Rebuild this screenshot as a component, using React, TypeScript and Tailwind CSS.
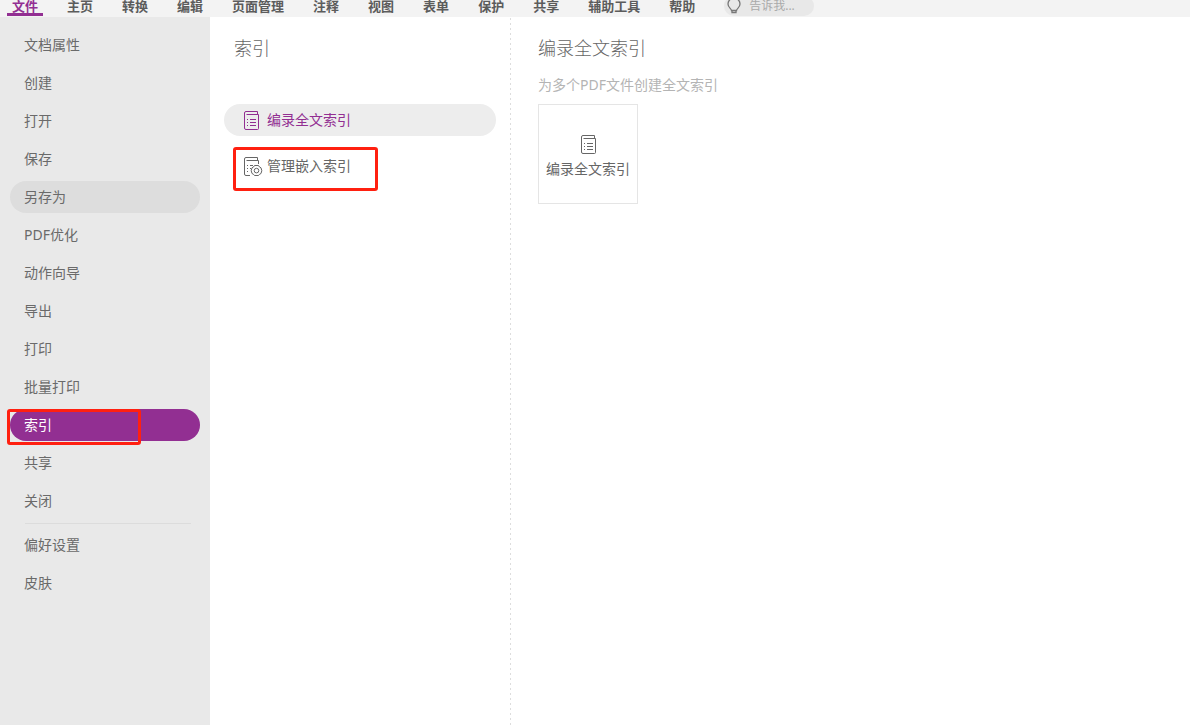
import React, { useState } from "react";
import clsx from "clsx";

const tabs = [
  "文件",
  "主页",
  "转换",
  "编辑",
  "页面管理",
  "注释",
  "视图",
  "表单",
  "保护",
  "共享",
  "辅助工具",
  "帮助",
];

const fileMenu = [
  "文档属性",
  "创建",
  "打开",
  "保存",
  "另存为",
  "PDF优化",
  "动作向导",
  "导出",
  "打印",
  "批量打印",
  "索引",
  "共享",
  "关闭",
];

const settingsMenu = ["偏好设置", "皮肤"];

function IndexIcon() {
  return (
    <svg width="15" height="20" viewBox="0 -1 15 20" fill="none" stroke="currentColor">
      <path d="M13.5 3.5V.5H2A1.5 1.5 0 0 0 .5 2v15A1.5 1.5 0 0 0 2 18.500h11.500a1 1 0 0 0 1-1V3.500H2.500" />
      <path d="M3 8.500h1M3 11.500h1M3 14.500h1M6 8.500h6M6 11.500h6M6 14.500h6" />
    </svg>
  );
}

function ManageIndexIcon() {
  return (
    <svg width="19" height="20" viewBox="0 -1 19 20" fill="none" stroke="currentColor">
      <path d="M13.5 3.5V.5H2A1.5 1.5 0 0 0 .5 2v15A1.5 1.5 0 0 0 2 18.500h4M2.500 3.500h12V7" />
      <path d="M3 8.500h1M3 11.500h1M3 14.500h1M6 8.500h3M6 11.500h1" />
      <path d="M10.500 8.500h4l1 1.500 1.500.8.800 2.900-.8 2.800-1.500.8-1 1.200h-4l-1-1.200-1.500-.8-.8-2.800.8-2.900 1.500-.8z" />
      <circle cx="12.500" cy="13.600" r="2.300" />
    </svg>
  );
}

function BulbIcon() {
  return (
    <svg width="14" height="17" viewBox="0 0 14 17" fill="none" stroke="currentColor" strokeWidth="1.3">
      <path d="M4.500 12.500C4.500 10.500 1 9.800 1 6a6 6 0 0 1 12 0c0 3.800-3.500 4.500-3.500 6.500z" />
      <path d="M5 12.500v2h4v-2" />
    </svg>
  );
}

function MenuItem({ label, active, hovered, onClick }: {
  label: string;
  active?: boolean;
  hovered?: boolean;
  onClick: () => void;
}) {
  return (
    <button
      onClick={onClick}
      className={clsx(
        "h-8 w-full rounded-full px-[14px] text-left text-sm",
        active ? "bg-[#922f92] text-white" : "text-[#6a6a6a] hover:bg-[#dddddd]",
        hovered && "bg-[#dddddd]"
      )}
    >
      {label}
    </button>
  );
}

export default function App() {
  const [tab, setTab] = useState("文件");
  const [section, setSection] = useState("索引");
  const [page, setPage] = useState("编录全文索引");

  return (
    <div className="flex min-h-screen flex-col bg-white font-['Noto_Sans','Noto_Sans_CJK_SC',sans-serif] text-[#666666]">
      <header className="flex h-[17px] items-end bg-[#f3f3f3] pb-px pl-[7px]">
        <nav className="flex gap-[19px]">
          {tabs.map((t) => (
            <button
              key={t}
              onClick={() => setTab(t)}
              className={clsx(
                "border-b-[3px] px-[5px] text-[13px] leading-[13px] font-bold",
                t === tab ? "border-[#922f92] text-[#922f92]" : "border-transparent text-[#5c5c5c]"
              )}
            >
              {t}
            </button>
          ))}
        </nav>
        <label className="ml-6 flex h-5 w-[90px] items-center gap-2 rounded-full bg-[#e8e8e8] pl-[3px] text-[#777777]">
          <BulbIcon />
          <input
            aria-label="告诉我"
            placeholder="告诉我..."
            className="w-14 bg-transparent text-xs outline-none placeholder:text-[#aaaaaa]"
          />
        </label>
      </header>

      <div className="flex grow">
        <aside className="flex w-[210px] shrink-0 flex-col bg-[#e9e9e9] px-[10px] pt-3">
          <nav className="flex flex-col gap-[6px]">
            {fileMenu.map((m) => (
              <div key={m} className="relative">
                <MenuItem
                  label={m}
                  active={m === section}
                  hovered={m === "另存为"}
                  onClick={() => setSection(m)}
                />
                {m === "索引" && (
                  <span className="pointer-events-none absolute -left-[3px] top-0 h-9 w-[134px] rounded-[3px] border-[3px] border-[#ff2010]" />
                )}
              </div>
            ))}
          </nav>
          <hr className="mt-[6px] mr-[9px] mb-[5px] ml-[15px] border-[#dcdcdc]" />
          <nav className="flex flex-col gap-[6px]">
            {settingsMenu.map((m) => (
              <MenuItem key={m} label={m} active={m === section} onClick={() => setSection(m)} />
            ))}
          </nav>
        </aside>

        <section className="w-[300px] shrink-0 px-[14px] pt-4">
          <h1 className="px-[10px] text-lg leading-[30px] font-light">索引</h1>
          <div className="mt-[41px] flex flex-col gap-[14px]">
            {["编录全文索引", "管理嵌入索引"].map((p, i) => (
              <div key={p} className="relative">
                <button
                  onClick={() => setPage(p)}
                  className={clsx(
                    "flex h-8 w-full items-center rounded-full pl-5 text-sm",
                    p === page && "bg-[#ededed] text-[#922f92]"
                  )}
                >
                  <span className="w-[23px]">{i === 0 ? <IndexIcon /> : <ManageIndexIcon />}</span>
                  {p}
                </button>
                {i === 1 && (
                  <span className="pointer-events-none absolute -top-[3px] left-[9px] h-11 w-[145px] rounded-[3px] border-[3px] border-[#ff2010]" />
                )}
              </div>
            ))}
          </div>
        </section>

        <div className="w-px shrink-0 bg-[repeating-linear-gradient(to_bottom,transparent_0_1px,#dddddd_1px_3px,transparent_3px_5px)]" />

        <main className="grow pt-4 pl-[27px]">
          <h2 className="text-lg leading-[30px] font-light">编录全文索引</h2>
          <p className="mt-3 text-sm text-[#b4b4b4]">为多个PDF文件创建全文索引</p>
          <button className="mt-[9px] flex size-[100px] flex-col items-center justify-center gap-[5px] border border-[#e5e5e5] pt-1 text-sm whitespace-nowrap">
            <IndexIcon />
            编录全文索引
          </button>
        </main>
      </div>
    </div>
  );
}
